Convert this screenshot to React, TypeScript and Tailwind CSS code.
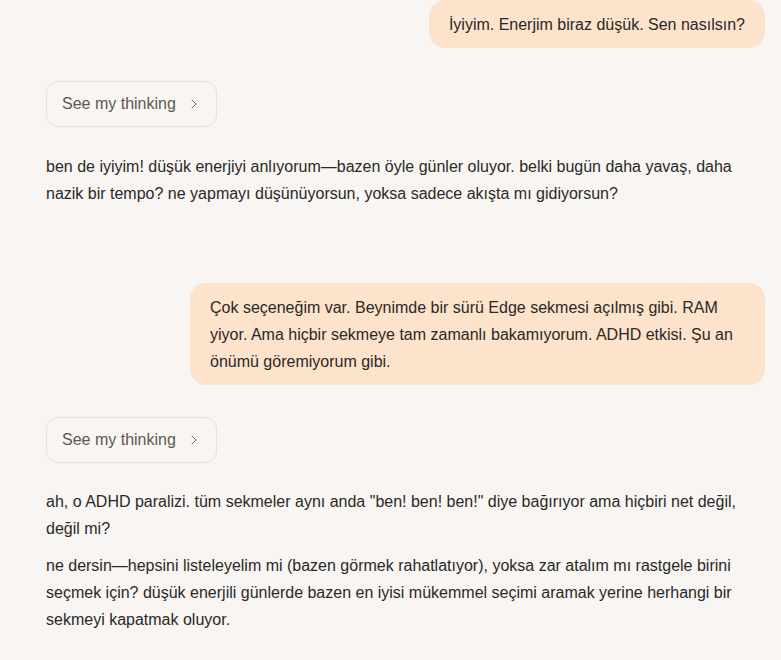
import React from 'react';
import { ChevronRight } from 'lucide-react';

const font = { fontFamily: '"Liberation Sans", Arial, sans-serif' };

function UserBubble({ children, className = '' }: { children: React.ReactNode; className?: string }) {
  return (
    <div className="flex justify-end">
      <div
        className={`rounded-2xl bg-[#fde2cc] px-5 pt-[11px] pb-[10px] text-[16px] leading-[27px] text-[#2b2926] ${className}`}
      >
        {children}
      </div>
    </div>
  );
}

function ThinkingButton() {
  return (
    <button
      type="button"
      className="flex h-[46px] w-[171px] items-center gap-[10px] rounded-xl border border-[#e6e1db] bg-[#f8f5f2] pl-[15px] text-[16px] text-[#5c5852]"
    >
      See my thinking
      <ChevronRight className="h-4 w-4 text-[#6b665f]" strokeWidth={1.5} />
    </button>
  );
}

export default function App() {
  return (
    <div className="min-h-[660px] w-full bg-[#f8f5f2] pl-[46px] pr-4" style={font}>
      <UserBubble className="whitespace-nowrap text-[15.5px]">İyiyim. Enerjim biraz düşük. Sen nasılsın?</UserBubble>

      <div className="mt-[33px]">
        <ThinkingButton />
      </div>

      <p className="mt-[26px] text-[16px] leading-[27px] text-[#2b2926]">
        ben de iyiyim! düşük enerjiyi anlıyorum—bazen öyle günler oluyor. belki bugün daha yavaş, daha nazik bir
        tempo? ne yapmayı düşünüyorsun, yoksa sadece akışta mı gidiyorsun?
      </p>

      <div className="mt-[76px]">
        <UserBubble className="w-[575px]">
          Çok seçeneğim var. Beynimde bir sürü Edge sekmesi açılmış gibi. RAM yiyor. Ama hiçbir sekmeye tam zamanlı
          bakamıyorum. ADHD etkisi. Şu an önümü göremiyorum gibi.
        </UserBubble>
      </div>

      <div className="mt-[32px]">
        <ThinkingButton />
      </div>

      <div className="mt-[25px] flex flex-col gap-[10px] text-[16px] leading-[27px] text-[#2b2926]">
        <p>
          ah, o ADHD paralizi. tüm sekmeler aynı anda "ben! ben! ben!" diye bağırıyor ama hiçbiri net değil, değil
          mi?
        </p>
        <p>
          ne dersin—hepsini listeleyelim mi (bazen görmek rahatlatıyor), yoksa zar atalım mı rastgele birini seçmek
          için? düşük enerjili günlerde bazen en iyisi mükemmel seçimi aramak yerine herhangi bir sekmeyi kapatmak
          oluyor.
        </p>
      </div>
    </div>
  );
}
